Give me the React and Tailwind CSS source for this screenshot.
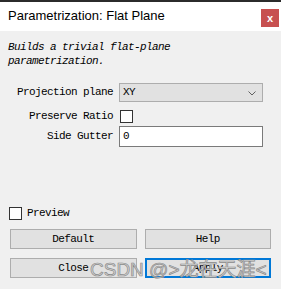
import React from 'react'

const mono = { fontFamily: '"Liberation Mono", "DejaVu Sans Mono", monospace' }

function Label({ children }) {
  return (
    <div className="w-[105px] shrink-0 text-right text-[11px] tracking-[-0.6px] text-black leading-none" style={mono}>
      {children}
    </div>
  )
}

function Button({ children, focused }) {
  return (
    <button
      type="button"
      className={`h-[20px] flex items-center justify-center bg-[#e1e1e1] text-[11px] tracking-[-0.6px] text-black ${
        focused ? 'border-2 border-[#0078d7]' : 'border border-[#adadad]'
      }`}
      style={mono}
    >
      {children}
    </button>
  )
}

export default function App() {
  return (
    <div className="relative w-[281px] h-[289px] bg-[#f0f0f0] border-t-2 border-[#2b2b2b] overflow-hidden">
      <div className="h-[29px] bg-white flex items-start justify-between pl-2 pr-[2px]">
        <span className="mt-[5px] text-[13px] leading-[18px] text-black font-['Liberation_Sans',sans-serif]">
          Parametrization: Flat Plane
        </span>
        <div className="mt-[7px] w-[18px] h-[18px] bg-[#c75050] flex items-center justify-center text-white text-[11px] font-bold leading-none font-['Liberation_Sans',sans-serif]">
          x
        </div>
      </div>

      <div className="pl-2 pt-[9px] text-[11px] leading-[14px] italic tracking-[-0.6px] text-black" style={mono}>
        <div>Builds a trivial flat-plane</div>
        <div>parametrization.</div>
      </div>

      <div className="mt-[15px] pl-2 flex flex-col">
        <div className="flex items-center gap-[6px] h-[19px]">
          <Label>Projection plane</Label>
          <div className="w-[144px] h-[19px] bg-[#e1e1e1] border border-[#adadad] flex items-center justify-between pl-[3px] pr-[6px]">
            <span className="text-[11px] tracking-[-0.6px] leading-none" style={mono}>XY</span>
            <svg width="8" height="5" viewBox="0 0 8 5" className="mt-[1px]">
              <path d="M0.5 0.5 L4 4 L7.5 0.5" fill="none" stroke="#606060" strokeWidth="1" />
            </svg>
          </div>
        </div>

        <div className="flex items-center gap-[6px] h-[13px] mt-[8px]">
          <Label>Preserve Ratio</Label>
          <div className="ml-[1px] w-[13px] h-[13px] bg-white border border-[#333333]" />
        </div>

        <div className="flex items-center gap-[6px] h-[21px] mt-[3px]">
          <Label>Side Gutter</Label>
          <div className="w-[144px] h-[21px] bg-white border border-[#7a7a7a] flex items-center pl-[3px]">
            <span className="text-[11px] tracking-[-0.6px] leading-none" style={mono}>0</span>
          </div>
        </div>
      </div>

      <div className="mt-[60px] pl-[9px] flex items-center gap-[5px] h-[13px]">
        <div className="w-[13px] h-[13px] bg-white border border-[#333333]" />
        <span className="text-[11px] tracking-[-0.6px] leading-none" style={mono}>Preview</span>
      </div>

      <div className="mt-[9px] px-[10px] grid grid-cols-2 gap-x-[8px] gap-y-[9px]">
        <Button>Default</Button>
        <Button>Help</Button>
        <Button>Close</Button>
        <Button focused>Apply</Button>
      </div>

      <div className="absolute left-[90px] top-[257px] text-[19px] leading-[22px] text-[#d6d6d6] whitespace-nowrap pointer-events-none [-webkit-text-stroke:0.7px_#8a8a8a] font-['Liberation_Sans','Noto_Sans_CJK_SC',sans-serif]">
        CSDN @&gt;龙在天涯&lt;
      </div>
    </div>
  )
}
